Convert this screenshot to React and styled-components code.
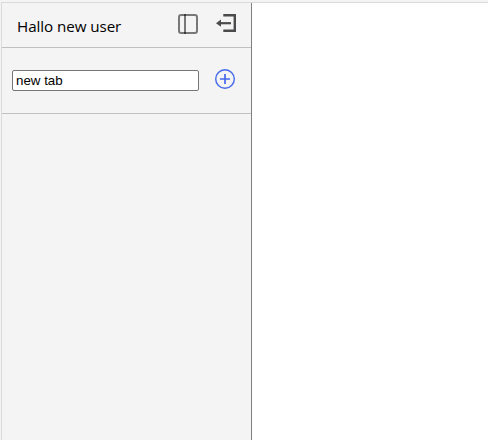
import React from "react";
import styled, { createGlobalStyle } from "styled-components";

const GlobalStyle = createGlobalStyle`
  * { box-sizing: border-box; }
  body { margin: 0; background: #fff; overflow: hidden; }
`;

const Page = styled.div`
  display: flex;
  flex-direction: column;
  height: 100vh;
  background: #f4f4f4;
  padding: 2px 0 0 1px;
`;

const Frame = styled.div`
  display: flex;
  flex: 1;
  border-top: 1px solid #dadada;
  border-left: 1px solid #dadada;
`;

const Sidebar = styled.aside`
  width: 250px;
  flex: none;
  background: #f4f4f4;
  border-right: 1px solid #808080;
`;

const Content = styled.main`
  flex: 1;
  background: #fff;
`;

const Header = styled.header`
  display: flex;
  align-items: flex-start;
  height: 45px;
  padding: 0 15px;
  border-bottom: 1px solid #c0c0c0;
`;

const Greeting = styled.h1`
  flex: 1;
  margin: 0;
  font: 400 15.2px/46px "Open Sans", "Noto Sans", sans-serif;
  letter-spacing: -0.07px;
  color: #000;
  white-space: nowrap;
`;

const Actions = styled.div`
  display: flex;
  gap: 18px;
  padding-top: 11px;
`;

const IconButton = styled.button`
  display: block;
  width: 20px;
  height: 20px;
  padding: 0;
  border: 0;
  background: none;
  color: ${({ $color }) => $color || "#4b4a4c"};

  svg { display: block; overflow: visible; }
`;

const NewTabRow = styled.form`
  display: flex;
  align-items: flex-start;
  gap: 16px;
  height: 66px;
  padding: 21px 10px 0;
  border-bottom: 1px solid #c0c0c0;
`;

const TabInput = styled.input`
  width: 187px;
  height: 21px;
  margin: 1px 0 0;
  padding: 1px 3px;
  border: 1px solid #767676;
  border-radius: 2px;
  background: #fff;
  color: #000;
  outline: 0;
  font: 13.333px "Liberation Sans", Arial, sans-serif;
`;

const PanelIcon = () => (
  <svg width="20" height="20" fill="none" stroke="#000" strokeOpacity="0.51" strokeWidth="2">
    <rect x="1" y="1" width="18" height="18" rx="2.2" />
    <path d="M7 0V20" />
  </svg>
);

const LogoutIcon = () => (
  <svg width="20" height="20" fill="none" stroke="currentColor" strokeWidth="2.4">
    <path d="M7.3 1.2H18.8V16.8H7.3" />
    <path d="M4 9.2H15" strokeWidth="2.2" />
    <path d="M0 9.2L5 5.6V12.8Z" fill="currentColor" stroke="none" />
  </svg>
);

const AddIcon = () => (
  <svg width="20" height="20" fill="none" stroke="currentColor">
    <circle cx="10" cy="10" r="9.3" strokeWidth="1.4" />
    <path d="M10 5V15M5 10H15" strokeWidth="1.7" />
  </svg>
);

export default function App() {
  return (
    <Page>
      <GlobalStyle />
      <Frame>
        <Sidebar>
          <Header>
            <Greeting>Hallo new user</Greeting>
            <Actions>
              <IconButton type="button" aria-label="Toggle sidebar"><PanelIcon /></IconButton>
              <IconButton type="button" aria-label="Log out"><LogoutIcon /></IconButton>
            </Actions>
          </Header>
          <NewTabRow>
            <TabInput defaultValue="new tab" aria-label="Tab name" />
            <IconButton type="button" $color="#4468ea" aria-label="Add tab"><AddIcon /></IconButton>
          </NewTabRow>
        </Sidebar>
        <Content />
      </Frame>
    </Page>
  );
}
